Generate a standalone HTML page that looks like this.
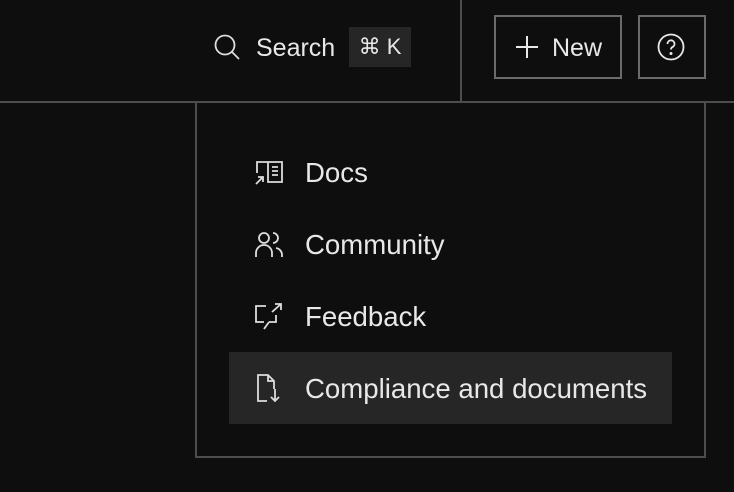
<!DOCTYPE html>
<html><head><style>
*{margin:0;padding:0;box-sizing:border-box}
body{width:734px;height:492px;background:#0e0e0e;color:#e6e6e6;font-family:"Liberation Sans",sans-serif;position:relative;overflow:hidden}
.a{position:absolute}
.t{font-size:25px;line-height:30px;color:#e8e8e8}
.m{font-size:27.6px;line-height:32px;color:#e8e8e8}
</style></head><body>
<div class="a" style="left:0;top:101px;width:734px;height:2px;background:#4d4d4d"></div>
<div class="a" style="left:460px;top:0;width:2px;height:102px;background:#4d4d4d"></div>
<svg class="a" style="left:213px;top:33px" width="28" height="28" viewBox="0 0 28 28" fill="none" stroke="#ddd" stroke-width="1.8"><circle cx="12" cy="12" r="9.5"/><path d="M19 19l7 7"/></svg>
<div class="a t" style="left:256px;top:33px">Search</div>
<div class="a" style="left:349px;top:27px;width:62px;height:40px;background:#262626;color:#e8e8e8;font-size:22px;line-height:40px;text-align:center">⌘ K</div>
<div class="a" style="left:494px;top:15px;width:128px;height:64px;border:2px solid #6b6b6b"></div>
<svg class="a" style="left:515px;top:35px" width="24" height="24" viewBox="0 0 24 24" stroke="#e8e8e8" stroke-width="2"><path d="M12 1v22M1 12h22"/></svg>
<div class="a t" style="left:552px;top:33px">New</div>
<div class="a" style="left:638px;top:15px;width:68px;height:64px;border:2px solid #6b6b6b"></div>
<svg class="a" style="left:657px;top:33px" width="28" height="28" viewBox="0 0 28 28" fill="none" stroke="#e8e8e8" stroke-width="1.8"><circle cx="14" cy="14" r="12.5"/><path d="M10.5 11a3.5 3.5 0 1 1 5 3c-1.2.6-1.5 1.3-1.5 2.5"/><circle cx="14" cy="20.5" r=".6" fill="#e8e8e8"/></svg>
<div class="a" style="left:195px;top:102px;width:511px;height:356px;border:2px solid #4d4d4d;border-top:none"></div>
<div class="a" style="left:229px;top:352px;width:443px;height:72px;background:#262626"></div>
<svg class="a" style="left:254px;top:160px" width="30" height="26" viewBox="0 0 30 26" fill="none" stroke="#ddd" stroke-width="1.8"><path d="M3 13V2h11M14 2h14v20H14zM14 2v20M18 7h6M18 11h6M18 15h6M2 24l7-7M4 17h5v5"/></svg>
<div class="a m" style="left:305px;top:157px">Docs</div>
<svg class="a" style="left:254px;top:230px" width="30" height="28" viewBox="0 0 30 28" fill="none" stroke="#ddd" stroke-width="1.8"><circle cx="10" cy="8" r="5"/><path d="M2 27v-4a8 8 0 0 1 16 0v4M19 3a5 5 0 0 1 0 10M22 18a7 7 0 0 1 6 7v2"/></svg>
<div class="a m" style="left:305px;top:229px">Community</div>
<svg class="a" style="left:254px;top:302px" width="30" height="30" viewBox="0 0 30 30" fill="none" stroke="#ddd" stroke-width="1.8"><path d="M12 4H2v16h8M15 20h7v-7M10 27l5-7M18 10l9-8M21 2h6v6"/></svg>
<div class="a m" style="left:305px;top:301px">Feedback</div>
<svg class="a" style="left:256px;top:373px" width="30" height="30" viewBox="0 0 30 30" fill="none" stroke="#ddd" stroke-width="1.8"><path d="M11 28H2V2h10l6 6v8M12 2v6h6M19 16v12M15 24l4 4 4-4"/></svg>
<div class="a m" style="left:305px;top:373px">Compliance and documents</div>
</body></html>
